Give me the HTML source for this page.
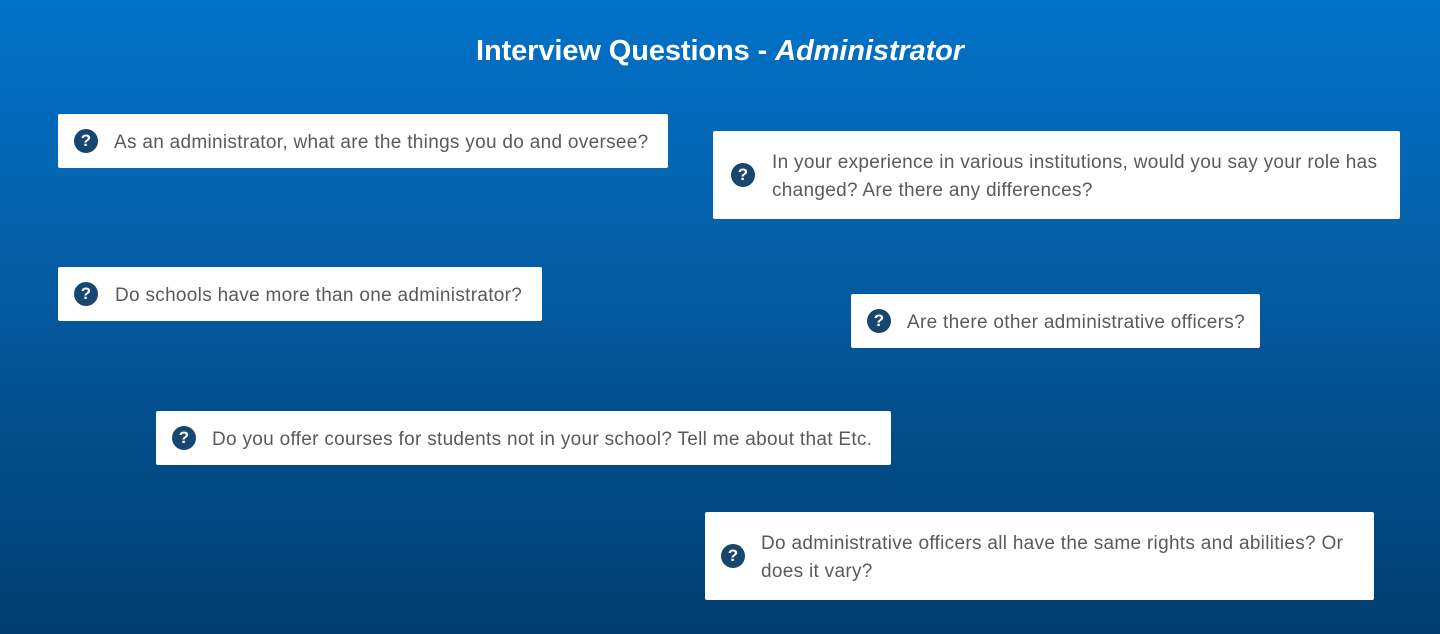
<!DOCTYPE html>
<html><head><meta charset="utf-8"><style>
html,body{margin:0;padding:0}
body{width:1440px;height:634px;overflow:hidden;position:relative;background:linear-gradient(180deg,#0072c8 0%,#0561ab 35%,#034f8e 65%,#023e70 100%);font-family:"Liberation Sans",sans-serif}
h1{position:absolute;top:35px;left:0;width:1440px;text-align:center;margin:0;color:#fff;font-size:29px;font-weight:bold;letter-spacing:-0.1px}
.b{position:absolute;background:#fff;border-radius:2px;box-sizing:border-box}
.i{position:absolute;width:24px;height:24px;border-radius:50%;background:#17466f;color:#fff;font-weight:bold;font-size:17px;line-height:24px;text-align:center}
.t{position:absolute;color:#5a5a5a;font-size:19px;letter-spacing:0.3px;line-height:28px;white-space:nowrap}
</style></head><body>
<h1>Interview Questions - <i>Administrator</i></h1>
<div class="b" style="left:58px;top:114px;width:610px;height:54px"><div class="i" style="left:16px;top:15px">?</div><div class="t" style="left:56px;top:15px">As an administrator, what are the things you do and oversee?</div></div>
<div class="b" style="left:713px;top:131px;width:687px;height:88px"><div class="i" style="left:18px;top:32px">?</div><div class="t" style="left:59px;top:18px">In your experience in various institutions, would you say your role has<br>changed? Are there any differences?</div></div>
<div class="b" style="left:58px;top:267px;width:484px;height:54px"><div class="i" style="left:16px;top:15px">?</div><div class="t" style="left:57px;top:15px">Do schools have more than one administrator?</div></div>
<div class="b" style="left:851px;top:294px;width:409px;height:54px"><div class="i" style="left:16px;top:15px">?</div><div class="t" style="left:56px;top:15px">Are there other administrative officers?</div></div>
<div class="b" style="left:156px;top:411px;width:735px;height:54px"><div class="i" style="left:16px;top:15px">?</div><div class="t" style="left:56px;top:15px">Do you offer courses for students not in your school? Tell me about that Etc.</div></div>
<div class="b" style="left:705px;top:512px;width:669px;height:88px"><div class="i" style="left:16px;top:32px">?</div><div class="t" style="left:56px;top:18px">Do administrative officers all have the same rights and abilities? Or<br>does it vary?</div></div>
</body></html>
